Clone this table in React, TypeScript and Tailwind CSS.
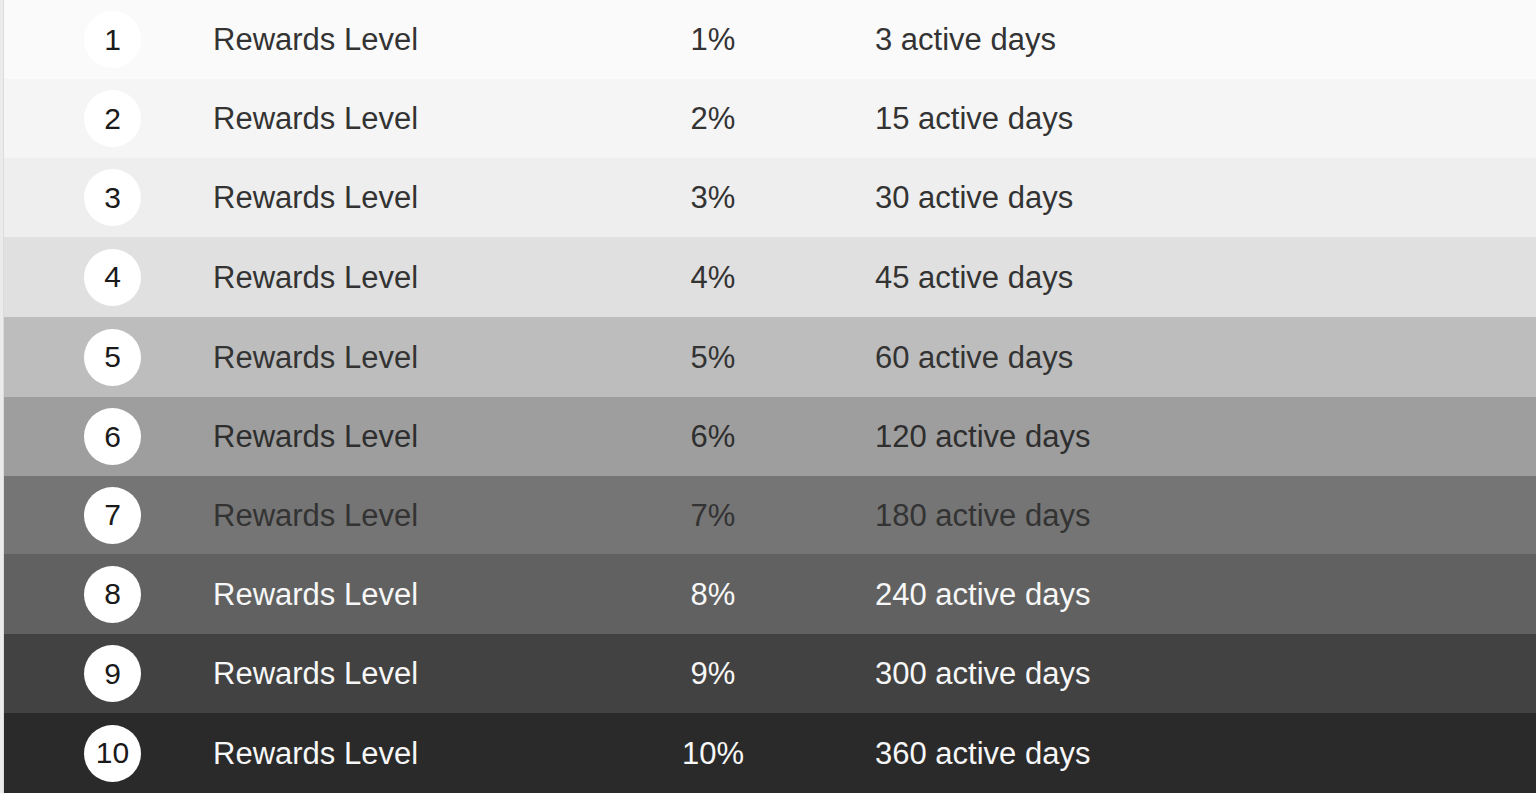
import React from "react";

const rows = [
  { n: 1, pct: "1%", days: "3 active days", bg: "bg-[#fafafa]", h: "h-[79px]", text: "text-[#333333]" },
  { n: 2, pct: "2%", days: "15 active days", bg: "bg-[#f5f5f5]", h: "h-[79px]", text: "text-[#333333]" },
  { n: 3, pct: "3%", days: "30 active days", bg: "bg-[#eeeeee]", h: "h-[79px]", text: "text-[#333333]" },
  { n: 4, pct: "4%", days: "45 active days", bg: "bg-[#e0e0e0]", h: "h-[80px]", text: "text-[#333333]" },
  { n: 5, pct: "5%", days: "60 active days", bg: "bg-[#bdbdbd]", h: "h-[80px]", text: "text-[#333333]" },
  { n: 6, pct: "6%", days: "120 active days", bg: "bg-[#9e9e9e]", h: "h-[79px]", text: "text-[#2e2e2e]" },
  { n: 7, pct: "7%", days: "180 active days", bg: "bg-[#757575]", h: "h-[78px]", text: "text-[#333333]" },
  { n: 8, pct: "8%", days: "240 active days", bg: "bg-[#616161]", h: "h-[80px]", text: "text-[#f7f7f7]" },
  { n: 9, pct: "9%", days: "300 active days", bg: "bg-[#424242]", h: "h-[79px]", text: "text-[#f7f7f7]" },
  { n: 10, pct: "10%", days: "360 active days", bg: "bg-[#2a2a2a]", h: "h-[80px]", text: "text-[#f7f7f7]" },
];

export default function App() {
  return (
    <div className="flex w-[1536px] h-[793px] overflow-hidden font-['Liberation_Sans',Arial,sans-serif]">
      <div className="w-[4px] shrink-0 bg-[#ebebeb] border-r border-[#dcdcdc]" />
      <div className="flex-1 flex flex-col">
        {rows.map((r) => (
          <div key={r.n} className={`flex items-center ${r.bg} ${r.h} ${r.text} text-[31px] leading-none`}>
            <div className="w-[209px] shrink-0 pl-[80px] flex items-center">
              <div className="w-[57px] h-[57px] rounded-full bg-white flex items-center justify-center text-[#1a1a1a] text-[30px]">
                {r.n}
              </div>
            </div>
            <div className="w-[400px] shrink-0">Rewards Level</div>
            <div className="w-[200px] shrink-0 text-center">{r.pct}</div>
            <div className="pl-[62px]">{r.days}</div>
          </div>
        ))}
      </div>
    </div>
  );
}
